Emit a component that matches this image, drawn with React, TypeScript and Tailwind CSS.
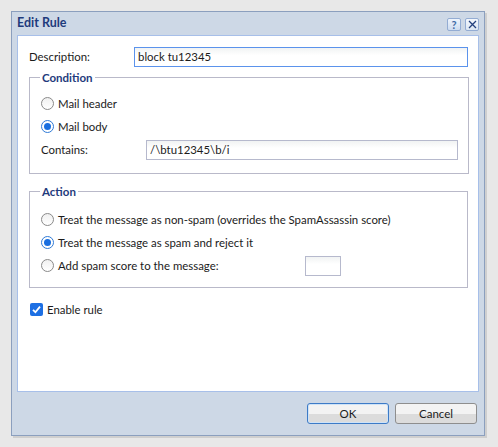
import React from 'react'

const font = { fontFamily: 'Lato, "Liberation Sans", sans-serif' }

function Radio({ checked }: { checked?: boolean }) {
  return checked ? (
    <span className="flex h-[13px] w-[13px] shrink-0 items-center justify-center rounded-full border border-[#2f7ad6] bg-white">
      <span className="h-[7px] w-[7px] rounded-full bg-[#1a6fe0]" />
    </span>
  ) : (
    <span className="h-[13px] w-[13px] shrink-0 rounded-full border border-[#8a8a8a] bg-gradient-to-b from-[#f0f0f0] to-white" />
  )
}

function Option({ checked, children, className }: { checked?: boolean; children: React.ReactNode; className?: string }) {
  return (
    <label className={`flex h-[23px] items-center gap-[4px] text-[11.4px] text-[#1b1b1b] ${className ?? ''}`}>
      <Radio checked={checked} />
      {children}
    </label>
  )
}

function TextBox({ value, className }: { value?: string; className: string }) {
  return (
    <div
      className={`flex h-[20px] items-center bg-gradient-to-b from-[#f1f3f3] to-white to-40% px-[3px] text-[11.4px] text-[#1b1b1b] ${className}`}
    >
      {value}
    </div>
  )
}

function Group({ title, children, className }: { title: string; children: React.ReactNode; className?: string }) {
  return (
    <fieldset className={`border border-[#b9b9c9] ${className ?? ''}`}>
      <legend className="-ml-[1px] px-[2px] text-[11.5px] font-bold leading-[15px] text-[#1f3b7c]">{title}</legend>
      {children}
    </fieldset>
  )
}

function FooterButton({ label, primary }: { label: string; primary?: boolean }) {
  return (
    <button
      className={`h-[21px] w-[82px] rounded-[3px] border bg-gradient-to-b from-[#f3f3f3] from-50% to-[#dcdcdc] to-50% text-[11.5px] text-[#1b1b1b] ${
        primary ? 'border-[#3d7bc7] shadow-[inset_0_0_0_1px_#cfe3f7]' : 'border-[#8e8e8e]'
      }`}
    >
      {label}
    </button>
  )
}

export default function App() {
  return (
    <div className="h-[447px] w-[498px] bg-[#e8e8e8] pl-[11px] pt-[11px]" style={font}>
      <div className="flex h-[425px] w-[474px] flex-col border border-[#8b9fbe] bg-[#cdd8e6] shadow-[2px_2px_0_#cfcfcf]">
        <div className="flex h-[23px] items-center justify-between pl-[5px] pr-[5px]">
          <span className="text-[12.5px] font-bold text-[#1f3b7c]">Edit Rule</span>
          <div className="flex gap-[4px] pt-[1px]">
            <span className="flex h-[13px] w-[14px] items-center justify-center rounded-[2px] border border-[#93acd3] bg-gradient-to-b from-[#eef4fc] to-[#cddcf0] text-[11px] font-bold leading-none text-[#3f6aa6]">
              ?
            </span>
            <span className="flex h-[13px] w-[14px] items-center justify-center rounded-[2px] border border-[#93acd3] bg-gradient-to-b from-[#f3f7fc] to-[#dce6f3]">
              <svg width="9" height="9" viewBox="0 0 9 9">
                <path d="M1 1 L8 8 M8 1 L1 8" stroke="#23407d" strokeWidth="1.3" />
              </svg>
            </span>
          </div>
        </div>
        <div className="mx-[5px] flex h-[357px] flex-col border border-[#a7bfe9] bg-white pl-[11px] pr-[10px] pt-[11px]">
          <div className="flex items-center">
            <span className="w-[105px] text-[11.4px] text-[#1b1b1b]">Description:</span>
            <TextBox value="block tu12345" className="w-[334px] border border-[#5b93ec]" />
          </div>
          <Group title="Condition" className="mt-[3px] h-[104px] w-[439px] pl-[11px] pr-[10px]">
            <div className="pt-[7px]">
              <Option>Mail header</Option>
              <Option checked>Mail body</Option>
              <div className="mt-[2px] flex items-center">
                <span className="w-[105px] text-[11.4px] text-[#1b1b1b]">Contains:</span>
                <TextBox value="/\btu12345\b/i" className="w-[312px] border border-[#b6b9cd]" />
              </div>
            </div>
          </Group>
          <Group title="Action" className="mt-[10px] h-[104px] w-[439px] pl-[11px] pr-[10px]">
            <div className="pt-[9px]">
              <Option>Treat the message as non-spam (overrides the SpamAssassin score)</Option>
              <Option checked>Treat the message as spam and reject it</Option>
              <div className="flex items-center">
                <Option className="w-[264px]">Add spam score to the message:</Option>
                <TextBox className="w-[36px] border border-[#b6b9cd]" />
              </div>
            </div>
          </Group>
          <label className="mt-[13px] flex items-center gap-[4px] pl-[1px] text-[11.4px] text-[#1b1b1b]">
            <span className="flex h-[13px] w-[13px] items-center justify-center rounded-[2px] bg-[#1d6fe3]">
              <svg width="11" height="11" viewBox="0 0 11 11">
                <path d="M2 5.8 L4.4 8.2 L9 2.6" stroke="white" strokeWidth="1.8" fill="none" />
              </svg>
            </span>
            Enable rule
          </label>
        </div>
        <div className="flex flex-1 items-start justify-end gap-[6px] pr-[7px] pt-[11px]">
          <FooterButton label="OK" primary />
          <FooterButton label="Cancel" />
        </div>
      </div>
    </div>
  )
}
